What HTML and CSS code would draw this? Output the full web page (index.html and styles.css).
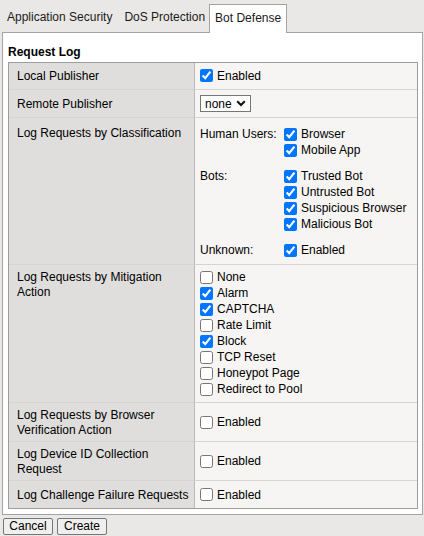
FILE: index.html
```html
<!DOCTYPE html>
<html>
<head>
<meta charset="utf-8">
<link rel="stylesheet" href="styles.css">
</head>
<body>
<div class="page">
  <div class="tabs">
    <div class="tab first">Application Security</div>
    <div class="tab second">DoS Protection</div>
    <div class="tab active">Bot Defense</div>
  </div>
  <div class="panel">
    <div class="heading">Request Log</div>
    <div class="tbl">
      <div class="lab mid firstrow">Local Publisher</div>
      <div class="val mid firstrow">
        <label class="opt single"><input type="checkbox" checked><span>Enabled</span></label>
      </div>

      <div class="lab mid sep">Remote Publisher</div>
      <div class="val mid sep">
        <div class="select">
          <select><option>none</option></select>
          <svg class="chev" width="10" height="7" viewBox="0 0 10 7"><path d="M1.2 1.3 L5 5 L8.8 1.3" fill="none" stroke="#111" stroke-width="2"/></svg>
        </div>
      </div>

      <div class="lab sep cls-lab">Log Requests by Classification</div>
      <div class="val sep cls-val">
        <div class="grp">
          <div class="glabel">Human Users:</div>
          <div class="opts">
            <label class="opt"><input type="checkbox" checked><span>Browser</span></label>
            <label class="opt"><input type="checkbox" checked><span>Mobile App</span></label>
          </div>
        </div>
        <div class="grp">
          <div class="glabel">Bots:</div>
          <div class="opts">
            <label class="opt"><input type="checkbox" checked><span>Trusted Bot</span></label>
            <label class="opt"><input type="checkbox" checked><span>Untrusted Bot</span></label>
            <label class="opt"><input type="checkbox" checked><span>Suspicious Browser</span></label>
            <label class="opt"><input type="checkbox" checked><span>Malicious Bot</span></label>
          </div>
        </div>
        <div class="grp">
          <div class="glabel">Unknown:</div>
          <div class="opts">
            <label class="opt"><input type="checkbox" checked><span>Enabled</span></label>
          </div>
        </div>
      </div>

      <div class="lab sep mit-lab">Log Requests by Mitigation Action</div>
      <div class="val sep mit-val">
        <label class="opt"><input type="checkbox"><span>None</span></label>
        <label class="opt"><input type="checkbox" checked><span>Alarm</span></label>
        <label class="opt"><input type="checkbox" checked><span>CAPTCHA</span></label>
        <label class="opt"><input type="checkbox"><span>Rate Limit</span></label>
        <label class="opt"><input type="checkbox" checked><span>Block</span></label>
        <label class="opt"><input type="checkbox"><span>TCP Reset</span></label>
        <label class="opt"><input type="checkbox"><span>Honeypot Page</span></label>
        <label class="opt"><input type="checkbox"><span>Redirect to Pool</span></label>
      </div>

      <div class="lab mid sep">Log Requests by Browser Verification Action</div>
      <div class="val mid sep">
        <label class="opt single"><input type="checkbox"><span>Enabled</span></label>
      </div>

      <div class="lab mid sep">Log Device ID Collection Request</div>
      <div class="val mid sep">
        <label class="opt single"><input type="checkbox"><span>Enabled</span></label>
      </div>

      <div class="lab mid sep">Log Challenge Failure Requests</div>
      <div class="val mid sep">
        <label class="opt single"><input type="checkbox"><span>Enabled</span></label>
      </div>
    </div>
  </div>
  <div class="buttons">
    <button class="btn">Cancel</button>
    <button class="btn">Create</button>
  </div>
</div>
</body>
</html>
```

FILE: styles.css
```css
html, body {
  margin: 0;
  padding: 0;
  background: #e9e8e6;
}
body {
  font-family: "Liberation Sans", Arial, sans-serif;
  font-size: 12px;
  line-height: 15px;
  color: #111;
}
.page {
  padding: 0 1px 0 2px;
}
.tabs {
  display: flex;
  align-items: flex-start;
  height: 32px;
}
.tab {
  padding: 10px 6px 7px;
  white-space: nowrap;
  color: #1a1a1a;
}
.tab.first {
  padding-left: 5px;
}
.tab.second {
  padding-right: 4px;
}
.tab.active {
  position: relative;
  z-index: 1;
  margin-top: 4px;
  padding: 6px 5px 7px;
  background: #fff;
  border: 1px solid #a3a3a3;
  border-bottom: 0;
}
.panel {
  background: #fff;
  border: 1px solid #a3a3a3;
  padding: 5px 4px 5px 5px;
}
.heading {
  font-weight: bold;
  padding: 7px 0 2px;
  color: #000;
}
.tbl {
  display: grid;
  grid-template-columns: 186px 1fr;
  border: 1px solid #9d9d9d;
}
.lab {
  background: #dfdedc;
  border-right: 1px solid #b9b9b9;
  padding: 4px 4px 4px 8px;
  color: #000;
}
.lab.mid {
  padding-top: 5px;
  padding-bottom: 3px;
}
.val {
  background: #f6f5f3;
  padding: 4px 5px;
}
.sep {
  border-top: 1px solid #d4d4d4;
}
.val.firstrow {
  padding-top: 3px;
}
.lab.firstrow {
  padding-top: 4px;
  padding-bottom: 3px;
}
.mid {
  display: flex;
  align-items: center;
}
.opt {
  display: flex;
  align-items: center;
  height: 16px;
  white-space: nowrap;
  color: #000;
}
.opt span {
  padding-top: 1px;
}
.opt.single {
  height: 19px;
}
.opt input {
  width: 13px;
  height: 13px;
  margin: 0 4px 0 0;
  flex: none;
}
.cls-lab {
  padding-top: 8px;
}
.cls-val {
  padding-bottom: 6px;
  display: flex;
  flex-direction: column;
  gap: 10px;
}
.grp {
  display: grid;
  grid-template-columns: 84px 1fr;
}
.grp:first-child {
  margin-top: 4px;
}
.glabel {
  line-height: 15px;
  padding-top: 1px;
  color: #000;
}
.mit-lab {
  padding-top: 5px;
}
.mit-val {
  padding-bottom: 5px;
}
.select {
  position: relative;
  display: inline-flex;
  margin: 1px 0;
}
.select select {
  appearance: none;
  -webkit-appearance: none;
  width: 51px;
  height: 17px;
  margin: 0;
  padding: 0 0 0 4px;
  border: 1px solid #767676;
  border-radius: 0;
  background: #fff;
  font-family: "Liberation Sans", Arial, sans-serif;
  font-size: 12px;
  color: #000;
}
.chev {
  position: absolute;
  left: 36px;
  top: 5px;
  pointer-events: none;
}
.buttons {
  display: flex;
  gap: 4px;
  padding: 3px 0 0 1px;
}
.btn {
  min-width: 50px;
  height: 17px;
  padding: 0 4px;
  margin: 0;
  border: 1px solid #767676;
  border-radius: 2px;
  background: #efefef;
  font-family: "Liberation Sans", Arial, sans-serif;
  font-size: 12px;
  line-height: 15px;
  color: #000;
}
```
